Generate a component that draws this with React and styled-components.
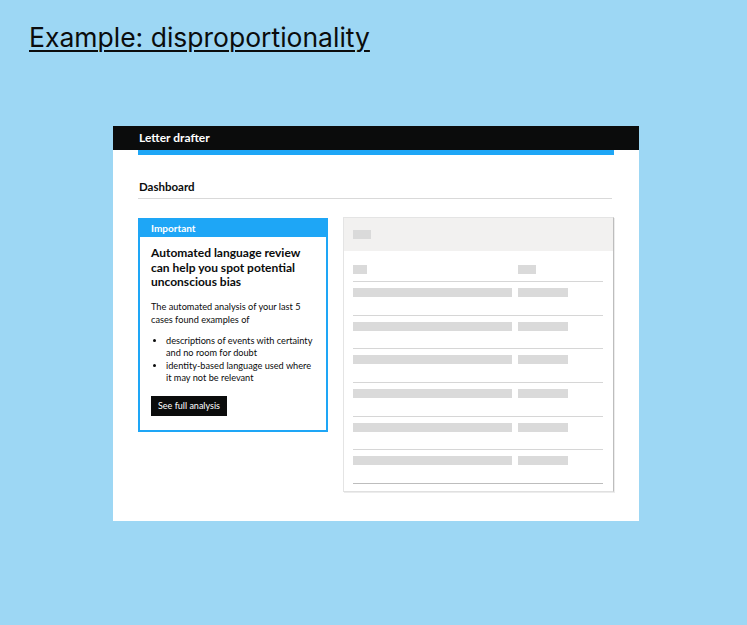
import React from "react";
import styled, { createGlobalStyle } from "styled-components";

const BLUE = "#1ea6f6";

const Global = createGlobalStyle`
  html, body { margin: 0; padding: 0; background: #9dd7f4; }
  body { font-family: Lato, "Noto Sans", sans-serif; color: #0b0c0c; }
`;

const Page = styled.div`
  width: 747px;
  height: 625px;
  box-sizing: border-box;
  padding: 20px 0 0 29px;
  display: flex;
  flex-direction: column;
`;

const Title = styled.h1`
  margin: 0;
  font-family: Inter, "Noto Sans", sans-serif;
  font-weight: 400;
  font-size: 26.5px;
  line-height: 34px;
  text-decoration: underline;
  text-decoration-thickness: 1.5px;
  text-underline-offset: 3px;
  color: #0b0c0c;
`;

const Card = styled.div`
  margin: 72px 0 0 84px;
  width: 526px;
  height: 395px;
  background: #fff;
  display: flex;
  flex-direction: column;
`;

const TopBar = styled.div`
  height: 24px;
  background: #0b0c0c;
  padding: 0 26px 1px;
  box-sizing: border-box;
  display: flex;
  align-items: center;
  color: #fff;
  font-weight: 700;
  font-size: 12px;
`;

const Inner = styled.div`
  padding: 0 25px;
  display: flex;
  flex-direction: column;
`;

const BlueStrip = styled.div`
  height: 5px;
  background: ${BLUE};
`;

const PageHeading = styled.h2`
  margin: 24px 2px 0 0;
  padding: 0 0 4px 1px;
  font-size: 11.5px;
  font-weight: 700;
  line-height: 15px;
  border-bottom: 1px solid #d9d9d9;
`;

const Columns = styled.div`
  margin-top: 19px;
  display: flex;
  gap: 15px;
  align-items: flex-start;
`;

const Banner = styled.div`
  width: 190px;
  box-sizing: border-box;
  border: 2px solid ${BLUE};
  display: flex;
  flex-direction: column;
`;

const BannerHead = styled.div`
  background: ${BLUE};
  color: #fff;
  font-weight: 700;
  font-size: 10px;
  line-height: 16px;
  padding: 0 0 1px 11px;
`;

const BannerBody = styled.div`
  padding: 9px 11px 14px 11px;
  display: flex;
  flex-direction: column;
`;

const BannerTitle = styled.h3`
  margin: 0;
  font-size: 12px;
  font-weight: 700;
  line-height: 14.5px;
`;

const Para = styled.p`
  margin: 10px 0 0;
  font-size: 9.2px;
  line-height: 13px;
`;

const List = styled.ul`
  margin: 9px 0 0;
  padding: 0 0 0 15px;
  font-size: 9.2px;
  line-height: 12.5px;
`;

const Button = styled.button`
  margin-top: 11px;
  align-self: flex-start;
  background: #0b0c0c;
  color: #fff;
  border: none;
  font-family: inherit;
  font-size: 9px;
  padding: 0 7px;
  height: 20px;
`;

const Panel = styled.div`
  width: 271px;
  box-sizing: border-box;
  margin-top: -1px;
  border: 1px solid #e4e4e4;
  border-right: 1px solid #bdbdbd;
  border-bottom: 1px solid #e0e0e0;
  box-shadow: 1px 1px 0 #ececec;
  display: flex;
  flex-direction: column;
  padding-bottom: 7px;
`;

const PanelHead = styled.div`
  flex: none;
  height: 33px;
  background: #f2f1f0;
  display: flex;
  align-items: center;
  padding-left: 9px;
`;

const Block = styled.div`
  background: #dadada;
  height: ${(p) => p.$h || 10}px;
  width: ${(p) => p.$w}px;
  flex: none;
`;

const Table = styled.div`
  padding: 14px 10px 0 9px;
  display: flex;
  flex-direction: column;
`;

const Row = styled.div`
  flex: none;
  display: flex;
  gap: 6px;
  align-items: flex-start;
  border-bottom: 1px solid ${(p) => (p.$last ? "#bdbdbd" : "#d6d6d6")};
  height: ${(p) => p.$h}px;
  box-sizing: border-box;
  padding-top: ${(p) => p.$pt}px;
`;

const Cell = styled.div`
  width: ${(p) => p.$w}px;
  display: flex;
  flex: none;
`;

export default function App() {
  const rows = [0, 1, 2, 3, 4, 5];
  return (
    <>
      <Global />
      <Page>
        <Title>Example: disproportionality</Title>
        <Card>
          <TopBar>Letter drafter</TopBar>
          <Inner>
            <BlueStrip />
            <PageHeading>Dashboard</PageHeading>
            <Columns>
              <Banner>
                <BannerHead>Important</BannerHead>
                <BannerBody>
                  <BannerTitle>
                    Automated language review can help you spot potential
                    unconscious bias
                  </BannerTitle>
                  <Para>
                    The automated analysis of your last 5 cases found examples
                    of
                  </Para>
                  <List>
                    <li>descriptions of events with certainty and no room for doubt</li>
                    <li>identity-based language used where it may not be relevant</li>
                  </List>
                  <Button>See full analysis</Button>
                </BannerBody>
              </Banner>
              <Panel>
                <PanelHead>
                  <Block $w={18} $h={9} />
                </PanelHead>
                <Table>
                  <Row $h={17} $pt={0}>
                    <Cell $w={159}>
                      <Block $w={14} $h={9} />
                    </Cell>
                    <Cell $w={50}>
                      <Block $w={18} $h={9} />
                    </Cell>
                  </Row>
                  {rows.map((r) => (
                    <Row key={r} $h={33.67} $pt={6} $last={r === 5}>
                      <Cell $w={159}>
                        <Block $w={159} $h={9} />
                      </Cell>
                      <Cell $w={50}>
                        <Block $w={50} $h={9} />
                      </Cell>
                    </Row>
                  ))}
                </Table>
              </Panel>
            </Columns>
          </Inner>
        </Card>
      </Page>
    </>
  );
}
